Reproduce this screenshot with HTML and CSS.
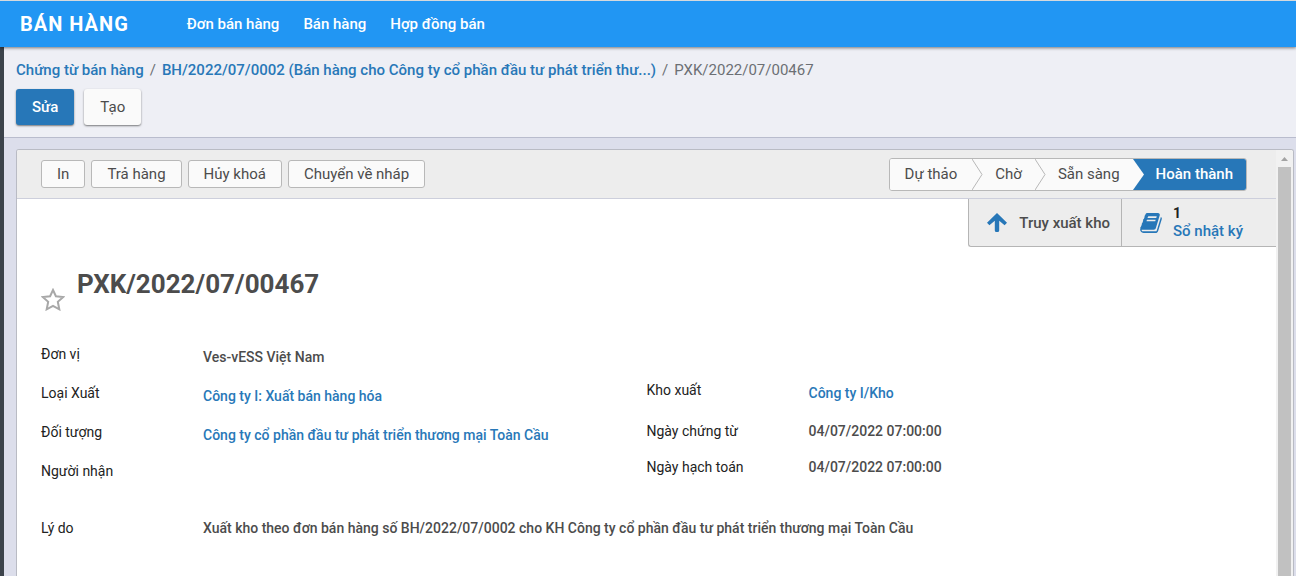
FILE: index.html
```html
<!DOCTYPE html>
<html lang="vi">
<head>
<meta charset="utf-8">
<title>PXK/2022/07/00467</title>
<link rel="stylesheet" href="styles.css">
</head>
<body>
<header class="navbar">
  <a class="brand" href="#">BÁN HÀNG</a>
  <nav class="menu">
    <a href="#">Đơn bán hàng</a>
    <a href="#">Bán hàng</a>
    <a href="#">Hợp đồng bán</a>
  </nav>
</header>
<div class="app">
  <div class="control-panel">
    <nav class="breadcrumb">
      <a href="#">Chứng từ bán hàng</a><span class="sep">/</span><a href="#">BH/2022/07/0002 (Bán hàng cho Công ty cổ phần đầu tư phát triển thư...)</a><span class="sep">/</span><span>PXK/2022/07/00467</span>
    </nav>
    <div class="actions">
      <button class="btn btn-primary" type="button">Sửa</button>
      <button class="btn" type="button">Tạo</button>
    </div>
  </div>
  <main class="content">
    <div class="card">
      <div class="sheet">
        <div class="statusbar">
          <div class="status-actions">
            <button type="button">In</button>
            <button type="button">Trả hàng</button>
            <button type="button">Hủy khoá</button>
            <button type="button">Chuyển về nháp</button>
          </div>
          <div class="steps">
            <button type="button" class="step first">Dự thảo</button>
            <svg class="chevron" viewBox="0 0 11 31"><path d="M0 0 10 15.500 0 31"/></svg>
            <button type="button" class="step">Chờ</button>
            <svg class="chevron" viewBox="0 0 11 31"><path d="M0 0 10 15.500 0 31"/></svg>
            <button type="button" class="step">Sẵn sàng</button>
            <svg class="chevron to-current" viewBox="0 0 11 31"><path d="M0 0 11 15.500 0 31Z"/></svg>
            <button type="button" class="step current">Hoàn thành</button>
          </div>
        </div>
        <div class="stats">
          <button type="button" class="stat">
            <svg class="icon-arrow" width="20" height="19" viewBox="0 0 20 19"><path d="M10 0 20 9.800 17.600 12.300 12.200 7.800V17.500Q12.200 19 10.500 19H9.500Q7.800 19 7.800 17.500V7.800L2.400 12.300 0 9.800Z"/></svg>
            <span>Truy xuất kho</span>
          </button>
          <button type="button" class="stat journal">
            <svg class="icon-book" width="22" height="20" viewBox="0 0 1664 1536"><path d="M1639 280q40 57 18 129l-275 906q-19 64-76.500 107.500T1183 1466H260q-77 0-148.500-53.500T12 1281q-24-67-2-127 0-4 3-27t4-37q1-8-3-21.500t-3-19.500q2-11 8-21t16.500-23.500T52 981q23-38 45-91.500t30-91.500q3-10 .5-30t-.5-28q3-11 17-28t17-23q21-36 42-92t25-90q1-9-2.500-32t.5-28q4-13 22-30.500t22-22.500q19-26 42.500-84.500T340 213q1-8-3-25.500t-2-26.500q2-8 9-18t18-23 17-21q8-12 16.500-30.500t15-35 16-36 19.500-32T472.500-58t36-11.500T556-64l-1 3q38-9 51-9h761q74 0 114 56t18 130l-274 906q-36 119-71.500 153.500T1025 1210H156q-27 0-38 15-11 16-1 43 24 70 144 70h923q29 0 56-15.500t35-41.500l300-987q7-22 5-57 38 15 59 43zM575 282q-4 13 2 22.500t20 9.500h608q13 0 25.500-9.500T1247 282l21-64q4-13-2-22.500t-20-9.500H638q-13 0-25.500 9.500T596 218zM492 538q-4 13 2 22.500t20 9.500h608q13 0 25.500-9.500T1164 538l21-64q4-13-2-22.500t-20-9.500H555q-13 0-25.500 9.500T513 474z" transform="translate(0 70)"/></svg>
            <span class="stat-text"><b>1</b><span>Sổ nhật ký</span></span>
          </button>
        </div>
        <div class="title">
          <button type="button" class="favorite" aria-label="Yêu thích">
            <svg width="24" height="23" viewBox="0 0 24 23"><path d="M12 2 14.900 8.200 22.300 9 16.800 13.800 18.300 21.300 12 17.900 5.700 21.300 7.200 13.800 1.700 9 9.100 8.200Z"/></svg>
          </button>
          <h1>PXK/2022/07/00467</h1>
        </div>
        <div class="groups">
          <dl class="fields left">
            <dt>Đơn vị</dt><dd>Ves-vESS Việt Nam</dd>
            <dt>Loại Xuất</dt><dd><a href="#">Công ty I: Xuất bán hàng hóa</a></dd>
            <dt>Đối tượng</dt><dd><a href="#">Công ty cổ phần đầu tư phát triển thương mại Toàn Cầu</a></dd>
            <dt>Người nhận</dt><dd></dd>
          </dl>
          <dl class="fields right">
            <dt>Kho xuất</dt><dd class="linked"><a href="#">Công ty I/Kho</a></dd>
            <dt>Ngày chứng từ</dt><dd>04/07/2022 07:00:00</dd>
            <dt>Ngày hạch toán</dt><dd>04/07/2022 07:00:00</dd>
          </dl>
        </div>
        <dl class="fields reason">
          <dt>Lý do</dt><dd>Xuất kho theo đơn bán hàng số BH/2022/07/0002 cho KH Công ty cổ phần đầu tư phát triển thương mại Toàn Cầu</dd>
        </dl>
      </div>
      <div class="scrollbar">
        <svg width="13" height="17" viewBox="0 0 13 17"><path d="M3 11 6.500 7 10 11Z"/></svg>
        <div class="thumb"></div>
      </div>
    </div>
  </main>
</div>
</body>
</html>
```
FILE: styles.css
```css
* { box-sizing: border-box; }
body {
  margin: 0;
  height: 100vh;
  display: flex;
  flex-direction: column;
  overflow: hidden;
  font: 400 14px/20px Roboto, sans-serif;
  color: #4c4c4c;
}
a { color: #2878b8; text-decoration: none; }
button { font: inherit; color: inherit; cursor: pointer; }
svg { display: block; flex: none; }

.navbar {
  position: relative;
  z-index: 1;
  flex: none;
  display: flex;
  align-items: center;
  height: 47px;
  padding-left: 20px;
  background: #2196f3;
  border-top: 1px solid #d5d9dd;
  box-shadow: 0 1px 3px rgba(0, 0, 0, .5);
}
.navbar a { color: #fff; }
.brand { font-size: 20px; font-weight: 700; letter-spacing: 1px; }
.menu { display: flex; gap: 24px; margin-left: 58px; font-size: 15px; font-weight: 500; }

.app {
  flex: 1;
  min-height: 0;
  display: flex;
  flex-direction: column;
  border-left: 4px solid #3c434b;
}
.control-panel {
  flex: none;
  padding: 13px 12px 12px;
  background: #eeeff5;
  border-bottom: 1px solid #b9bccd;
}
.breadcrumb { font-size: 15px; color: #6c6f74; }
.breadcrumb a { font-weight: 500; }
.sep { padding: 0 6px; }
.actions { display: flex; gap: 10px; margin-top: 9px; }
.btn {
  height: 36px;
  padding: 0 16px;
  border: 0;
  border-radius: 3px;
  background: #fafafa;
  font-size: 15px;
  box-shadow: 0 1px 2px rgba(0, 0, 0, .5);
}
.btn-primary { background: #2777b8; color: #fff; font-weight: 500; }

.content {
  flex: 1;
  min-height: 0;
  display: flex;
  padding: 11px 2px 0 12px;
  background: #dcdeeb;
}
.card {
  flex: 1;
  display: flex;
  overflow: hidden;
  background: #fff;
  border: 1px solid #b9bbc4;
  border-bottom: 0;
  border-radius: 3px 3px 0 0;
}
.sheet { flex: 1; min-width: 0; }
.statusbar {
  display: flex;
  justify-content: space-between;
  align-items: center;
  height: 49px;
  padding: 0 29px 0 24px;
  background: #ededed;
  border-bottom: 1px solid #cdcfdc;
}
.status-actions { display: flex; gap: 6px; font-size: 15px; }
.status-actions button {
  height: 28px;
  padding: 0 15px;
  background: #fafafa;
  border: 1px solid #b8b8b8;
  border-radius: 3px;
}
.steps {
  display: flex;
  height: 33px;
  overflow: hidden;
  background: #fafafa;
  border: 1px solid #b8b8b8;
  border-radius: 3px;
  font-size: 15px;
}
.step { padding: 0 13px 0 12px; border: 0; background: #fafafa; }
.step.first { padding: 0 15px; }
.step.current { background: #2777b8; color: #fff; font-weight: 500; }
.chevron { width: 11px; height: 31px; fill: none; stroke: #b8b8b8; }
.chevron.to-current { background: #2777b8; fill: #fafafa; stroke: none; }

.stats { display: flex; justify-content: flex-end; height: 48px; }
.stat {
  display: flex;
  align-items: center;
  gap: 12px;
  padding: 0 11px 0 18px;
  background: #ededed;
  border: 0 solid #b5b5b5;
  border-width: 0 0 1px 1px;
  font-size: 15px;
  font-weight: 500;
}
.stat:first-child { border-radius: 0 0 0 3px; }
.stat.journal { width: 155px; gap: 11px; }
.stat-text { display: flex; flex-direction: column; padding-bottom: 2px; line-height: 18px; text-align: left; color: #2777b8; }
.stat-text b { color: #222; font-size: 14px; font-weight: 700; }
.icon-arrow, .icon-book { fill: #2777b8; }

.title { display: flex; gap: 12px; padding: 20px 24px 0; }
.favorite { padding: 0; margin-top: 21px; border: 0; background: none; }
.favorite path { fill: none; stroke: #a8a8a8; stroke-width: 2; }
h1 { margin: 0; font-size: 26px; line-height: 34px; font-weight: 700; }

.groups { display: grid; grid-template-columns: 1fr 1fr; padding: 33px 24px 0; }
.fields { display: grid; grid-template-columns: 162px 1fr; margin: 0; align-content: start; }
dt { color: #222; }
dd { margin: 0; font-weight: 500; }
.left { grid-auto-rows: 39px; }
.left dd, .linked { padding-top: 3px; }
.right { grid-template-rows: 41px 36px; padding-top: 36px; }
.reason { padding: 18px 24px 0; }

.scrollbar { flex: none; width: 17px; padding: 0 2px; background: #f1f1f1; display: flex; flex-direction: column; }
.scrollbar path { fill: #a3a3a3; }
.thumb { flex: 1; background: #c1c1c1; }
```
